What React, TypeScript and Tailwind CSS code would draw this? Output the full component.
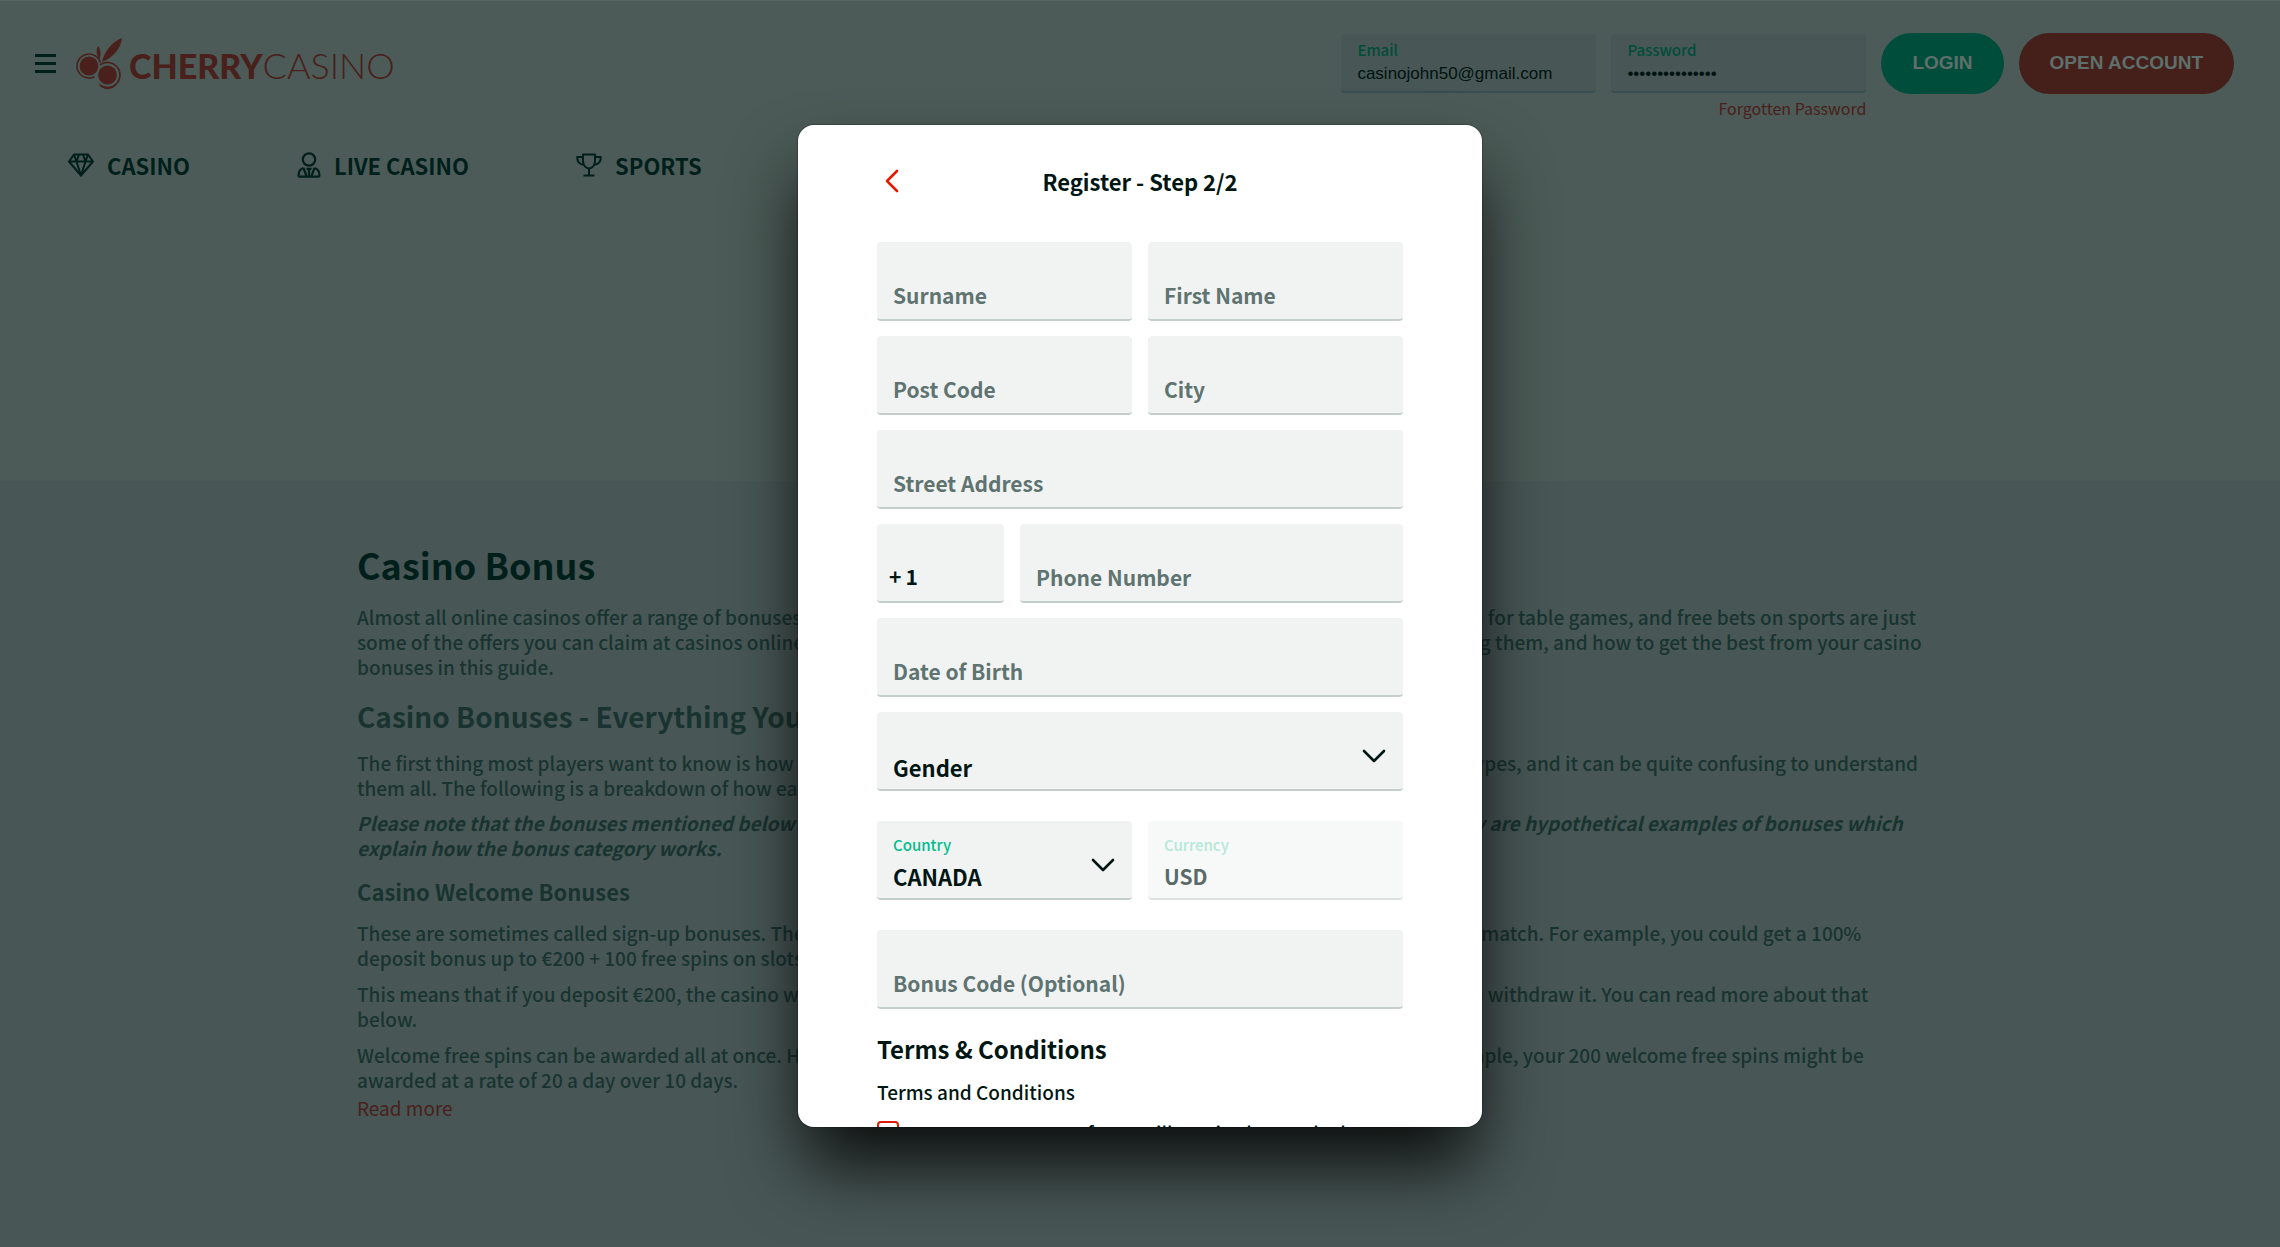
import type { InputHTMLAttributes, ReactNode } from 'react';

interface FieldProps extends InputHTMLAttributes<HTMLInputElement> {
  label: string;
}

const BOX = 'h-[79px] w-full rounded border-b-2 px-4';
const FIELD = `${BOX} border-[#c3cdcb] bg-[#f1f3f3]`;

function Field({ label, ...rest }: FieldProps) {
  return (
    <input
      aria-label={label}
      placeholder={label}
      className={`${FIELD} pt-7 text-[21px] font-bold text-[#001613] placeholder:text-[#5f7370] placeholder:opacity-100 outline-none`}
      {...rest}
    />
  );
}

function SelectField({ id, label, children }: { id: string; label?: string; children: ReactNode }) {
  return (
    <div className="relative">
      {label && (
        <label htmlFor={id} className="absolute left-4 top-3 text-[15px] leading-6 font-medium text-[#00bd8b]">
          {label}
        </label>
      )}
      <select
        id={id}
        aria-label={label ?? 'Gender'}
        className={`${FIELD} appearance-none pt-[34px] text-[22px] font-bold text-[#001613] outline-none`}
      >
        {children}
      </select>
      <svg
        viewBox="0 0 24 14"
        className="pointer-events-none absolute top-[37px] right-[17px] h-[14px] w-6"
        fill="none"
        stroke="#001613"
        strokeWidth="2.6"
        strokeLinecap="round"
        strokeLinejoin="round"
      >
        <path d="M2 2l10 10L22 2" />
      </svg>
    </div>
  );
}

function CherryMark() {
  return (
    <svg viewBox="0 0 46 52" className="h-[52px] w-[46px]" fill="#49201b">
      <circle cx="13" cy="28" r="9.4" />
      <path d="M18.5 38.7A12 12 0 1 1 24.6 25" fill="none" stroke="#49201b" strokeWidth="1.6" />
      <circle cx="31.5" cy="37" r="9.4" />
      <path d="M24 26.8A12.6 12.6 0 1 1 24 47.2" fill="none" stroke="#49201b" strokeWidth="1.6" />
      <path d="M22.5 44.5c4 6.200 15 6.200 19.500-1.500-3 11-17.500 10-19.500 1.500z" />
      <path d="M26 24c2-9 8-19 20-24-1 10-9 20-20 24z" />
      <path d="M22 8c2.800 3 3 9 1.500 13-3-3-3.800-8.500-1.500-13z" />
    </svg>
  );
}

function DiamondIcon() {
  return (
    <svg viewBox="0 0 26 24" className="h-6 w-[26px]" fill="none" stroke="currentColor" strokeWidth="2" strokeLinejoin="round">
      <path d="M6 1.500h14l5 7L13 22.500 1 8.500z" />
      <path d="M1 8.500h24M8.500 8.500L13 22.500l4.500-14M6 1.500l2.500 7L11 1.500M15 1.500l2.500 7 2.500-7" />
    </svg>
  );
}

function DealerIcon() {
  return (
    <svg viewBox="0 0 24 26" className="h-[26px] w-6" fill="none" stroke="currentColor" strokeWidth="2.2" strokeLinejoin="round">
      <circle cx="12" cy="7.500" r="6.200" />
      <path d="M6.500 16C3 17 1.500 20 1.500 23.500q0 1.200 1.200 1.200h18.600q1.200 0 1.200-1.200C22.500 20 21 17 17.500 16" />
      <path d="M6.500 16l3 8M17.500 16l-3 8M9.500 16.800h5M12 17v7.500" />
    </svg>
  );
}

function TrophyIcon() {
  return (
    <svg viewBox="0 0 26 24" className="h-6 w-[26px]" fill="none" stroke="currentColor" strokeWidth="2" strokeLinejoin="round">
      <path d="M7 1.500h12v6.500c0 4.500-3 7.500-6 7.500S7 12.500 7 8z" />
      <path d="M7 4H1.200c0 5 2.300 7.500 6.800 7.800M19 4h5.800c0 5-2.300 7.500-6.800 7.800M13 15.500V22M7.500 22.500h11" />
    </svg>
  );
}

const NAV = [
  { label: 'CASINO', icon: <DiamondIcon /> },
  { label: 'LIVE CASINO', icon: <DealerIcon /> },
  { label: 'SPORTS', icon: <TrophyIcon /> },
];

const LOGIN_FIELDS = [
  { id: 'email', label: 'Email', type: 'email', value: 'casinojohn50@gmail.com' },
  { id: 'password', label: 'Password', type: 'password', value: 'casinojohn50000' },
];

function Header() {
  return (
    <header className="h-[481px] border-t border-[#586763] bg-[#4c5b57] pt-8">
      <div className="flex items-start pr-[46px] pl-[35px]">
        <button aria-label="Menu" className="mt-[21px] flex w-[21px] flex-col gap-[5px]">
          <span className="h-[3px] bg-[#001f1b]" />
          <span className="h-[3px] bg-[#001f1b]" />
          <span className="h-[3px] bg-[#001f1b]" />
        </button>
        <a href="#home" className="mt-[5px] ml-5 flex items-start gap-[7px] font-[Lato] text-[#49201b]">
          <CherryMark />
          <span className="leading-[54px]">
            <span className="text-[34px] font-black">CHERRY</span>
            <span className="text-[36px] font-light">CASINO</span>
          </span>
        </a>
        <form className="ml-auto flex gap-[15px]">
          {LOGIN_FIELDS.map((f) => (
            <div key={f.id} className="w-[255px] pt-px">
              <div className="h-[59px] rounded border-b-2 border-[#3a4d4f] bg-[#485755] px-4 pt-1">
                <label htmlFor={f.id} className="block text-[15px] leading-6 font-medium text-[#004d3c]">
                  {f.label}
                </label>
                <input
                  id={f.id}
                  type={f.type}
                  defaultValue={f.value}
                  className="block h-6 w-full font-['Liberation_Sans'] text-[17px] text-[#001210] outline-none"
                />
              </div>
              {f.id === 'password' && (
                <a href="#forgot" className="mt-[3px] block text-right text-base leading-6 text-[#49201b]">
                  Forgotten Password
                </a>
              )}
            </div>
          ))}
          <button className="h-[61px] rounded-full bg-[#004d3c] px-[31px] font-['Liberation_Sans'] text-[19px] font-bold text-[#5f6f6b]">
            LOGIN
          </button>
          <button className="h-[61px] rounded-full bg-[#45201b] px-[31px] font-['Liberation_Sans'] text-[19px] font-bold text-[#5f6f6b]">
            OPEN ACCOUNT
          </button>
        </form>
      </div>
      <nav className="mt-[29px] flex gap-[107px] pl-[68px]">
        {NAV.map((item) => (
          <a key={item.label} href="#nav" className="flex items-center gap-[13px] text-[22px] leading-8 font-bold text-[#001f1b]">
            {item.icon}
            {item.label}
          </a>
        ))}
      </nav>
    </header>
  );
}

function Article() {
  return (
    <main className="grow bg-[#485755] px-[357px] pt-[59px] text-[19px] leading-[25px] font-medium whitespace-nowrap text-[#193430]">
      <h1 className="text-[36px] leading-[48px] font-bold text-[#001f1b]">Casino Bonus</h1>
      <p className="mt-4">
        Almost all online casinos offer a range of bonuses to all of their new and existing players. Free spins on their slots, bonus cash for table games, and free bets on sports are just
        <br />
        some of the offers you can claim at casinos online. We explain how all of these offers work, what to look out for when claiming them, and how to get the best from your casino
        <br />
        bonuses in this guide.
      </p>
      <h2 className="mt-[19px] text-[28px] leading-9 font-bold">Casino Bonuses - Everything You Need to Know</h2>
      <p className="mt-4">
        The first thing most players want to know is how a casino bonus always works. There are a large number of different bonus types, and it can be quite confusing to understand
        <br />
        them all. The following is a breakdown of how each one works.
      </p>
      <p className="mt-[10px] font-bold italic">
        Please note that the bonuses mentioned below are not offered by this casino at the present moment but might vary. They are hypothetical examples of bonuses which
        <br />
        explain how the bonus category works.
      </p>
      <h3 className="mt-[17px] text-[22px] leading-7 font-bold">Casino Welcome Bonuses</h3>
      <p className="mt-[15px]">
        These are sometimes called sign-up bonuses. They are given to our brand new players and usually take the form of a deposit match. For example, you could get a 100%
        <br />
        deposit bonus up to €200 + 100 free spins on slots.
      </p>
      <p className="mt-[11px]">
        This means that if you deposit €200, the casino will give you another €200 to play with. You must still wager it fully before you withdraw it. You can read more about that
        <br />
        below.
      </p>
      <p className="mt-[11px]">
        Welcome free spins can be awarded all at once. However, some casinos hand them out in several much smaller lots. For example, your 200 welcome free spins might be
        <br />
        awarded at a rate of 20 a day over 10 days.
      </p>
      <a href="#more" className="mt-[3px] block font-normal text-[#49201b]">
        Read more
      </a>
    </main>
  );
}

function RegisterModal() {
  return (
    <div className="fixed inset-0 flex justify-center pt-[125px] pb-[120px]">
      <div
        role="dialog"
        aria-label="Register"
        className="w-[684px] overflow-y-auto rounded-2xl bg-white px-[79px] text-[#001613] shadow-[0_0_2px_0_rgba(0,0,0,0.7),0_44px_72px_-6px_rgba(0,0,0,0.85)] [scrollbar-width:none]"
      >
        <div className="flex items-center justify-center pt-9 pb-[41px]">
          <button aria-label="Back" className="w-6">
            <svg viewBox="0 0 14 24" className="ml-2 h-6 w-[14px]" fill="none" stroke="#e11b00" strokeWidth="2.600" strokeLinecap="round" strokeLinejoin="round">
              <path d="M12 2L2 12l10 10" />
            </svg>
          </button>
          <h2 className="grow pr-6 text-center text-[22px] leading-10 font-bold">Register - Step 2/2</h2>
        </div>
        <form>
          <div className="grid grid-cols-2 gap-x-4 gap-y-[15px]">
            <Field label="Surname" />
            <Field label="First Name" />
            <Field label="Post Code" />
            <Field label="City" />
            <div className="col-span-2">
              <Field label="Street Address" />
            </div>
            <div className="col-span-2 flex gap-4">
              <label className={`${FIELD} flex max-w-[127px] items-center gap-1 pt-7 text-[21px] font-bold`}>
                <span className="-ml-1">+</span>
                <input aria-label="Country code" defaultValue="1" className="w-full outline-none" />
              </label>
              <Field label="Phone Number" />
            </div>
            <div className="col-span-2">
              <Field label="Date of Birth" />
            </div>
            <div className="col-span-2">
              <SelectField id="gender">
                <option>Gender</option>
              </SelectField>
            </div>
          </div>
          <div className="mt-[30px] grid grid-cols-2 gap-4">
            <SelectField id="country" label="Country">
              <option>CANADA</option>
            </SelectField>
            <div className="relative">
              <label htmlFor="currency" className="absolute left-4 top-3 text-[15px] leading-6 font-medium text-[#b3e8d9]">
                Currency
              </label>
              <input
                id="currency"
                disabled
                defaultValue="USD"
                className={`${BOX} border-[#dbe1e0] bg-[#f7f8f8] pt-8 text-[21px] font-bold text-[#5a6a67]`}
              />
            </div>
          </div>
          <div className="mt-[30px]">
            <Field label="Bonus Code (Optional)" />
          </div>
          <h3 className="mt-[22px] text-[24px] leading-9 font-bold">Terms &amp; Conditions</h3>
          <p className="mt-3 text-[19px] leading-[26px] font-medium">Terms and Conditions</p>
          <label className="mt-4 flex items-start gap-[10px] pb-10 text-[19px] leading-6 font-medium">
            <input type="checkbox" className="h-[22px] w-[22px] appearance-none rounded border-2 border-[#e11b00]" />
            I am over 18 years of age, will receive bonus deals
          </label>
        </form>
      </div>
    </div>
  );
}

export default function App() {
  return (
    <div className="flex min-h-screen flex-col font-['Noto_Sans_CJK_SC',sans-serif]">
      <Header />
      <Article />
      <RegisterModal />
    </div>
  );
}
